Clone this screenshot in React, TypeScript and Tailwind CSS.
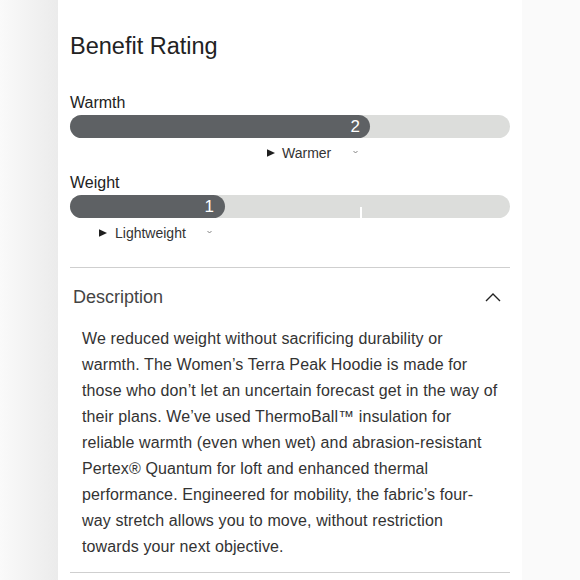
import React from "react";

const Tri = () => (
  <svg width="8" height="8" viewBox="0 0 8 8" className="shrink-0">
    <path d="M0 0.3 L8 4 L0 7.7 Z" fill="#1f1f1f" />
  </svg>
);

const SmallChevron = () => (
  <svg width="5" height="4" viewBox="0 0 5 4" className="shrink-0 mt-[7px]">
    <path d="M0.5 1 L2.5 3 L4.5 1" fill="none" stroke="#777" strokeWidth="0.9" />
  </svg>
);

const lines = [
  "We reduced weight without sacrificing durability or",
  "warmth. The Women\u2019s Terra Peak Hoodie is made for",
  "those who don\u2019t let an uncertain forecast get in the way of",
  "their plans. We\u2019ve used ThermoBall\u2122 insulation for",
  "reliable warmth (even when wet) and abrasion-resistant",
  "Pertex\u00ae Quantum for loft and enhanced thermal",
  "performance. Engineered for mobility, the fabric\u2019s four-",
  "way stretch allows you to move, without restriction",
  "towards your next objective.",
];

export default function App() {
  return (
    <div className="flex h-[580px] w-[580px] overflow-hidden font-['Liberation_Sans',Arial,sans-serif]">
      <div className="w-[58px] shrink-0 bg-gradient-to-r from-[#fafafa] to-[#ebebeb]" />
      <div className="w-[464px] shrink-0 bg-white px-3 pt-[32px]">
        <h2 className="text-[23.5px] leading-[28px] text-[#222]">Benefit Rating</h2>

        <div className="mt-[33px] text-[16px] leading-[20px] text-[#222]">Warmth</div>
        <div className="relative mt-[2px] flex h-[23px] rounded-full bg-[#dcdddb]">
          <div className="flex h-full w-[300px] items-center justify-end rounded-full bg-[#5e6164] pr-[10px] text-[17px] leading-none text-white">
            2
          </div>
        </div>
        <div className="mt-[5px] ml-[197px] flex items-start text-[14px] leading-[20px] text-[#333]">
          <div className="mt-[6px]"><Tri /></div>
          <span className="ml-[7px]">Warmer</span>
          <div className="ml-[22px]"><SmallChevron /></div>
        </div>

        <div className="mt-[10px] text-[16px] leading-[20px] text-[#222]">Weight</div>
        <div className="relative mt-[2px] flex h-[23px] rounded-full bg-[#dcdddb]">
          <div className="absolute left-[290px] top-[12px] h-[11px] w-[1.5px] bg-white" />
          <div className="relative flex h-full w-[155px] items-center justify-end rounded-full bg-[#5e6164] pr-[11px] text-[17px] leading-none text-white">
            1
          </div>
        </div>
        <div className="mt-[5px] ml-[29px] flex items-start text-[14px] leading-[20px] text-[#333]">
          <div className="mt-[6px]"><Tri /></div>
          <span className="ml-[8px]">Lightweight</span>
          <div className="ml-[21px]"><SmallChevron /></div>
        </div>

        <div className="mt-[24px] border-t border-[#cfcfcf]">
          <div className="mt-[17px] flex items-center justify-between pl-[3px] pr-[9px]">
            <span className="text-[18px] leading-[24px] text-[#444]">Description</span>
            <svg width="16" height="9" viewBox="0 0 16 9">
              <path d="M1 8 L8 1 L15 8" fill="none" stroke="#222" strokeWidth="1.4" />
            </svg>
          </div>
          <div className="mt-[17px] pl-[12px] text-[16px] leading-[26px] tracking-[0.12px] text-[#333]">
            {lines.map((l, i) => (
              <div key={i} className="whitespace-nowrap">{l}</div>
            ))}
          </div>
          <div className="mt-[12px] border-t border-[#cfcfcf]" />
        </div>
      </div>
      <div className="w-[58px] shrink-0 bg-[#fafafa]" />
    </div>
  );
}
